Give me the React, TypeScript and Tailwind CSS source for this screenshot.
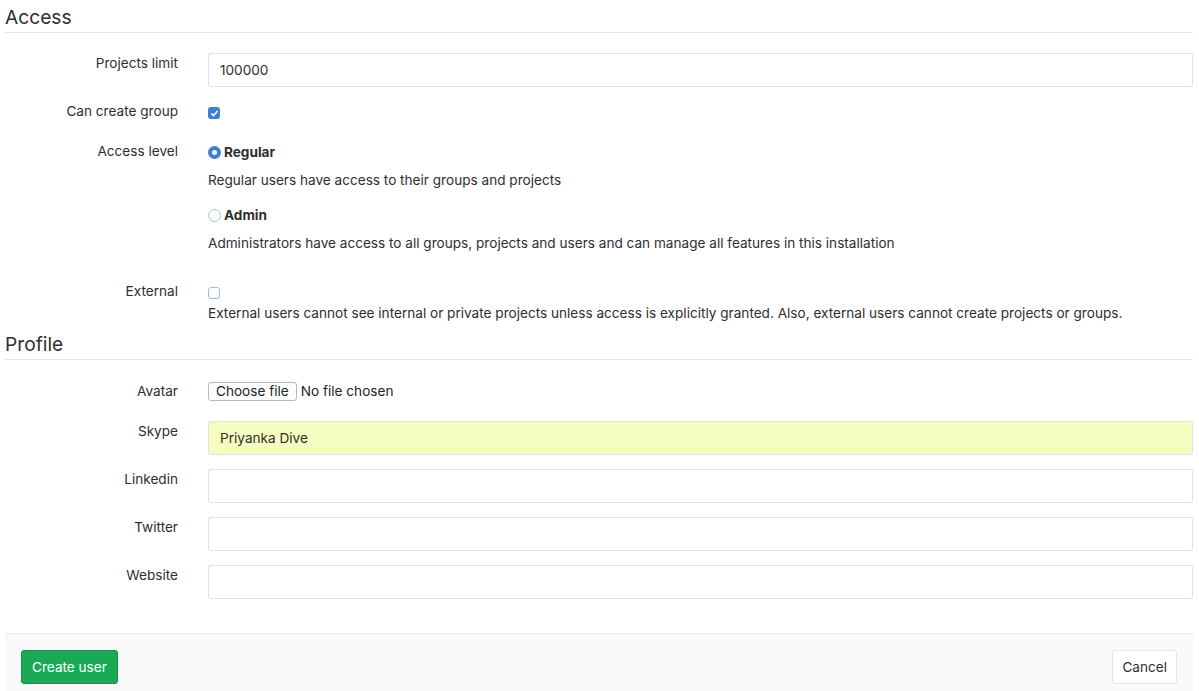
import React from "react";

const font = { fontFamily: 'Inter, "Liberation Sans", Arial, sans-serif' };

function Label({ children }: { children: React.ReactNode }) {
  return (
    <div className="w-[173px] shrink-0 text-right leading-[20px] text-[13.6px] text-[#2e2e2e]">
      {children}
    </div>
  );
}

function TextInput({ value, autofill }: { value?: string; autofill?: boolean }) {
  return (
    <div
      className={`flex-1 h-[34px] border border-[#e2e2e2] rounded-[2px] pl-[11px] flex items-center text-[13.6px] text-[#2e2e2e] ${
        autofill ? "bg-[#f4fcbf]" : "bg-white"
      }`}
    >
      {value}
    </div>
  );
}

function Checkbox({ checked }: { checked?: boolean }) {
  if (checked) {
    return (
      <span className="flex w-[12px] h-[12px] rounded-[3px] bg-[#3e7fd4] items-center justify-center">
        <svg width="9" height="9" viewBox="0 0 9 9">
          <path d="M1.8 4.8 L3.6 6.6 L7.2 2.4" stroke="white" strokeWidth="1.6" fill="none" strokeLinecap="round" strokeLinejoin="round" />
        </svg>
      </span>
    );
  }
  return <span className="block w-[12px] h-[12px] rounded-[3px] bg-white border border-[#9fbbd4]" />;
}

function Radio({ checked }: { checked?: boolean }) {
  if (checked) {
    return (
      <span className="flex w-[13px] h-[13px] rounded-full bg-[#3e7fd4] items-center justify-center">
        <span className="w-[5px] h-[5px] rounded-full bg-white" />
      </span>
    );
  }
  return <span className="block w-[13px] h-[13px] rounded-full bg-white border border-[#a9c0d6]" />;
}

function Heading({ children }: { children: React.ReactNode }) {
  return (
    <div className="pt-[6px] pb-[4px] leading-[22px] text-[19.2px] text-[#2e2e2e] border-b border-[#e5e5e5]">
      {children}
    </div>
  );
}

export default function App() {
  return (
    <div className="w-[1199px] h-[691px] bg-white overflow-hidden" style={font}>
      <div className="mx-[5px] w-[1188px]">
        <Heading>Access</Heading>

        {/* Projects limit */}
        <div className="flex gap-[30px] mt-[20px]">
          <Label>Projects limit</Label>
          <TextInput value="100000" />
        </div>

        {/* Can create group */}
        <div className="flex gap-[30px] mt-[14px] h-[20px]">
          <Label>Can create group</Label>
          <div className="h-[20px] pt-[6px] flex items-start">
            <Checkbox checked />
          </div>
        </div>

        {/* Access level */}
        <div className="flex gap-[30px] mt-[20px]">
          <Label>Access level</Label>
          <div className="flex flex-col pt-[1px] text-[13.6px] text-[#2e2e2e] leading-[20px]">
            <div className="flex items-center h-[20px]">
              <Radio checked />
              <span className="ml-[3px] font-bold">Regular</span>
            </div>
            <div className="mt-[8px]">Regular users have access to their groups and projects</div>
            <div className="flex items-center h-[20px] mt-[15px]">
              <Radio />
              <span className="ml-[3px] font-bold">Admin</span>
            </div>
            <div className="mt-[8px]">
              Administrators have access to all groups, projects and users and can manage all features in this installation
            </div>
          </div>
        </div>

        {/* External */}
        <div className="flex gap-[30px] mt-[28px]">
          <Label>External</Label>
          <div className="flex flex-col text-[13.6px] text-[#2e2e2e] leading-[20px]">
            <div className="h-[20px] pt-[6px]">
              <Checkbox />
            </div>
            <div className="mt-[2px]">
              External users cannot see internal or private projects unless access is explicitly granted. Also, external users cannot create projects or groups.
            </div>
          </div>
        </div>

        <div className="mt-[4px]">
          <Heading>Profile</Heading>
        </div>

        {/* Avatar */}
        <div className="flex gap-[30px] mt-[21px]">
          <Label>Avatar</Label>
          <div className="flex items-center h-[20px] text-[13.6px] text-[#2e2e2e] leading-[20px]">
            <span className="h-[19px] px-[7px] border border-[#b9b9b9] rounded-[3px] bg-[#fdfdfd] flex items-center text-[13.6px] text-[#222]">
              Choose file
            </span>
            <span className="ml-[4px] text-[#222]">No file chosen</span>
          </div>
        </div>

        <div className="flex gap-[30px] mt-[20px]">
          <Label>Skype</Label>
          <TextInput value="Priyanka Dive" autofill />
        </div>
        <div className="flex gap-[30px] mt-[14px]">
          <Label>Linkedin</Label>
          <TextInput />
        </div>
        <div className="flex gap-[30px] mt-[14px]">
          <Label>Twitter</Label>
          <TextInput />
        </div>
        <div className="flex gap-[30px] mt-[14px]">
          <Label>Website</Label>
          <TextInput />
        </div>

        {/* Footer */}
        <div className="mt-[34px] border-t border-[#e5e5e5] bg-[#fafafa] h-[80px] pt-[16px] pl-[16px] pr-[16px] flex justify-between items-start">
          <button className="h-[34px] px-[10px] bg-[#1aaa55] border border-[#168f48] rounded-[3px] text-white text-[13.6px]">
            Create user
          </button>
          <button className="h-[34px] px-[9px] bg-white border border-[#e5e5e5] rounded-[3px] text-[#2e2e2e] text-[13.6px]">
            Cancel
          </button>
        </div>
      </div>
    </div>
  );
}
